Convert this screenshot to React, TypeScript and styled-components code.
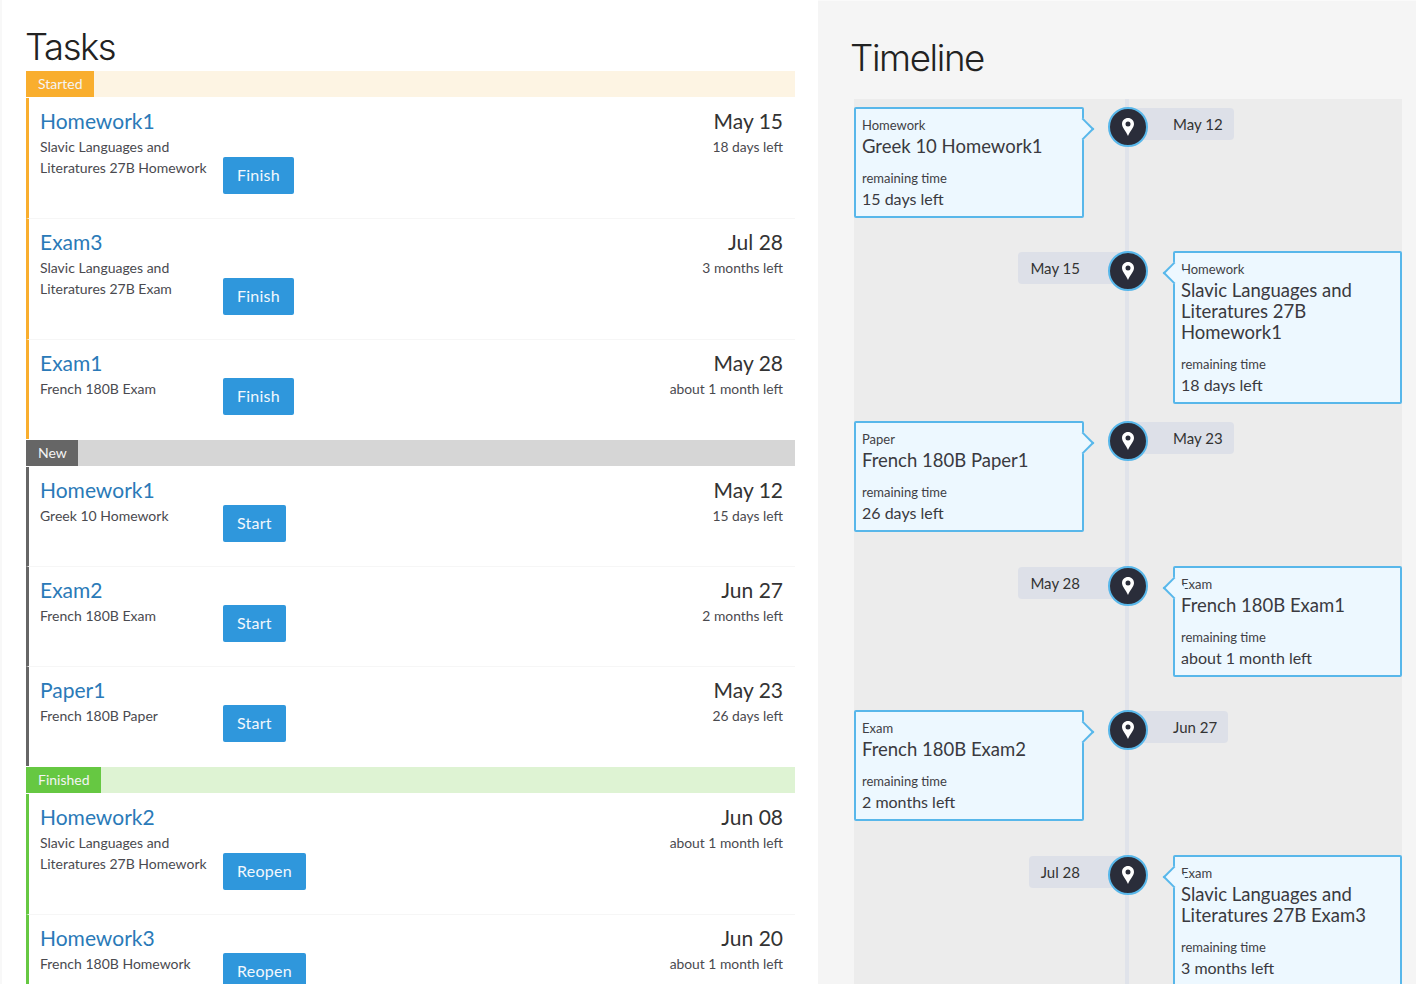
import React from 'react';
import styled, {createGlobalStyle} from 'styled-components';

const GlobalStyle = createGlobalStyle`
  html, body {
    margin: 0;
    padding: 0;
    background: #fff;
  }
  * {
    box-sizing: border-box;
  }
`;

const STATUS = {
  started: {bar: '#fdf4e3', badge: '#f9ae2e', line: '#f9ae2e'},
  fresh: {bar: '#d6d6d6', badge: '#666666', line: '#666666'},
  finished: {bar: '#def3d3', badge: '#66c842', line: '#66c842'}
};

type StatusKey = keyof typeof STATUS;

const Page = styled.div`
  display: flex;
  width: 1416px;
  height: 984px;
  overflow: hidden;
  font-family: Lato, 'Open Sans', sans-serif;
  color: #333;
`;

const TasksColumn = styled.div`
  width: 818px;
  flex: none;
  padding: 26px 23px 0 24px;
  border-left: 2px solid #f8f8f8;
  background: #fff;
`;

const TimelineColumn = styled.div`
  flex: 1;
  padding: 36px 16px 0 36px;
  background: #f5f5f5;
  border-top: 1px solid #fafafa;
`;

const Heading = styled.h1<{$large?: boolean}>`
  margin: ${(p) => (p.$large ? '-1px 0 19px -4px' : '0 0 3px -1px')};
  font-family: Inter, 'Liberation Sans', sans-serif;
  font-weight: 300;
  font-size: ${(p) => (p.$large ? 36.7 : 36.4)}px;
  line-height: ${(p) => (p.$large ? 44 : 42)}px;
  letter-spacing: -1.4px;
  color: #222;
`;

const SectionBar = styled.div<{$status: StatusKey}>`
  height: 26px;
  margin: 1px 0;
  background: ${(p) => STATUS[p.$status].bar};
`;

const SectionBadge = styled.span<{$status: StatusKey}>`
  display: inline-block;
  height: 26px;
  padding: 0 11.5px 0 12px;
  font-size: 14px;
  line-height: 26px;
  color: #f4f4f4;
  background: ${(p) => STATUS[p.$status].badge};
`;

const Task = styled.div<{$status: StatusKey}>`
  display: flex;
  justify-content: space-between;
  padding: 8px 12px 24px 11px;
  border-left: 3px solid ${(p) => STATUS[p.$status].line};
  border-bottom: 1px solid #f6f6f6;
  &:last-child {
    border-bottom: 0;
  }
`;

const TaskName = styled.a`
  display: block;
  font-size: 21px;
  line-height: 30px;
  color: #2a7ab8;
`;

const TaskBody = styled.div`
  display: flex;
  align-items: flex-end;
`;

const Course = styled.div`
  width: 183px;
  padding-bottom: 16px;
  font-size: 14px;
  line-height: 21px;
  color: #4a4a4f;
`;

const ActionButton = styled.button`
  height: 37px;
  padding: 0 14px 2px;
  border: 0;
  border-radius: 2px;
  font-family: inherit;
  font-size: 16px;
  letter-spacing: 0.25px;
  color: #f2f8fd;
  background: #2f97dc;
`;

const TaskDue = styled.div`
  text-align: right;
`;

const DueDate = styled.div`
  font-size: 21px;
  line-height: 30px;
  color: #333;
`;

const DueLeft = styled.div`
  font-size: 13.85px;
  line-height: 21px;
  color: #4a4a4f;
`;

const Track = styled.div`
  min-height: 900px;
  padding-top: 8px;
  background:
    linear-gradient(#e0e3ea, #e0e3ea) 271px 0 / 4px 100% no-repeat,
    #ececec;
`;

const TrackRow = styled.div<{$after: number}>`
  display: grid;
  grid-template-columns: 254px 40px 254px;
  align-items: start;
  margin-bottom: ${(p) => p.$after}px;
`;

const Card = styled.div<{$side: 'left' | 'right'}>`
  position: relative;
  width: ${(p) => (p.$side === 'left' ? 230 : 229)}px;
  margin-left: ${(p) => (p.$side === 'left' ? 0 : 25)}px;
  padding: 6px 6px 7px;
  border: 2px solid #58b7ea;
  border-radius: 2px;
  background: #edf8ff;
  &::after {
    content: '';
    position: absolute;
    top: 12px;
    width: 14px;
    height: 14px;
    background: #edf8ff;
    border-style: solid;
    border-color: #58b7ea;
    border-width: ${(p) => (p.$side === 'left' ? '2px 2px 0 0' : '0 0 2px 2px')};
    transform: rotate(45deg);
    ${(p) => (p.$side === 'left' ? 'right: -9px;' : 'left: -9px;')}
  }
`;

const CardType = styled.div`
  font-size: 13px;
  line-height: 20px;
  color: #3f3f45;
`;

const CardTitle = styled.div`
  padding-top: 1px;
  margin-bottom: 12px;
  font-size: 18.5px;
  line-height: 21px;
  color: #3a3a40;
`;

const CardLabel = styled.div`
  font-size: 13px;
  line-height: 19px;
  color: #3f3f45;
`;

const CardValue = styled.div`
  font-size: 16px;
  line-height: 21px;
  color: #3a3a40;
`;

const Marker = styled.div`
  position: relative;
  z-index: 1;
  display: flex;
  align-items: center;
  justify-content: center;
  width: 40px;
  height: 40px;
  border: 2.5px solid #58b7ea;
  border-radius: 50%;
  background: #2a2d3a;
`;

const DatePill = styled.div<{$side: 'left' | 'right'}>`
  justify-self: ${(p) => (p.$side === 'left' ? 'start' : 'end')};
  height: 32px;
  margin-top: 1px;
  margin-left: ${(p) => (p.$side === 'left' ? -20 : 0)}px;
  margin-right: ${(p) => (p.$side === 'right' ? -20 : 0)}px;
  padding: ${(p) => (p.$side === 'left' ? '0 11px 0 45px' : '0 48px 0 12px')};
  border-radius: 4px;
  font-size: 15px;
  line-height: 32px;
  color: #333;
  background: #dde0e8;
`;

const Pin = () => (
  <svg width="12" height="18" viewBox="0 0 12 18">
    <path
      fill="#fff"
      fillRule="evenodd"
      d="M6 0C2.7 0 0 2.6 0 5.9 0 9.6 4 12.8 6 18c2-5.200 6-8.400 6-12.100C12 2.600 9.300 0 6 0zm0 3.500a2.500 2.500 0 1 1 0 5 2.500 2.500 0 0 1 0-5z"
    />
  </svg>
);

const groups: {
  label: string;
  status: StatusKey;
  action: string;
  tasks: {name: string; course: string; date: string; left: string}[];
}[] = [
  {
    label: 'Started',
    status: 'started',
    action: 'Finish',
    tasks: [
      {name: 'Homework1', course: 'Slavic Languages and Literatures 27B Homework', date: 'May 15', left: '18 days left'},
      {name: 'Exam3', course: 'Slavic Languages and Literatures 27B Exam', date: 'Jul 28', left: '3 months left'},
      {name: 'Exam1', course: 'French 180B Exam', date: 'May 28', left: 'about 1 month left'}
    ]
  },
  {
    label: 'New',
    status: 'fresh',
    action: 'Start',
    tasks: [
      {name: 'Homework1', course: 'Greek 10 Homework', date: 'May 12', left: '15 days left'},
      {name: 'Exam2', course: 'French 180B Exam', date: 'Jun 27', left: '2 months left'},
      {name: 'Paper1', course: 'French 180B Paper', date: 'May 23', left: '26 days left'}
    ]
  },
  {
    label: 'Finished',
    status: 'finished',
    action: 'Reopen',
    tasks: [
      {name: 'Homework2', course: 'Slavic Languages and Literatures 27B Homework', date: 'Jun 08', left: 'about 1 month left'},
      {name: 'Homework3', course: 'French 180B Homework', date: 'Jun 20', left: 'about 1 month left'}
    ]
  }
];

const events: {
  type: string;
  title: string;
  date: string;
  left: string;
  side: 'left' | 'right';
  after: number;
}[] = [
  {type: 'Homework', title: 'Greek 10 Homework1', date: 'May 12', left: '15 days left', side: 'left', after: 33},
  {type: 'Homework', title: 'Slavic Languages and Literatures 27B Homework1', date: 'May 15', left: '18 days left', side: 'right', after: 17},
  {type: 'Paper', title: 'French 180B Paper1', date: 'May 23', left: '26 days left', side: 'left', after: 34},
  {type: 'Exam', title: 'French 180B Exam1', date: 'May 28', left: 'about 1 month left', side: 'right', after: 33},
  {type: 'Exam', title: 'French 180B Exam2', date: 'Jun 27', left: '2 months left', side: 'left', after: 34},
  {type: 'Exam', title: 'Slavic Languages and Literatures 27B Exam3', date: 'Jul 28', left: '3 months left', side: 'right', after: 0}
];

const App = () => {
  return (
    <Page>
      <GlobalStyle />
      <TasksColumn>
        <Heading>Tasks</Heading>
        {groups.map((group) => (
          <div key={group.label}>
            <SectionBar $status={group.status}>
              <SectionBadge $status={group.status}>{group.label}</SectionBadge>
            </SectionBar>
            {group.tasks.map((task) => (
              <Task key={task.name + task.date} $status={group.status}>
                <div>
                  <TaskName>{task.name}</TaskName>
                  <TaskBody>
                    <Course>{task.course}</Course>
                    <ActionButton>{group.action}</ActionButton>
                  </TaskBody>
                </div>
                <TaskDue>
                  <DueDate>{task.date}</DueDate>
                  <DueLeft>{task.left}</DueLeft>
                </TaskDue>
              </Task>
            ))}
          </div>
        ))}
      </TasksColumn>
      <TimelineColumn>
        <Heading $large>Timeline</Heading>
        <Track>
          {events.map((event) => {
            const card = (
              <Card $side={event.side}>
                <CardType>{event.type}</CardType>
                <CardTitle>{event.title}</CardTitle>
                <CardLabel>remaining time</CardLabel>
                <CardValue>{event.left}</CardValue>
              </Card>
            );
            const pill = <DatePill $side={event.side}>{event.date}</DatePill>;
            return (
              <TrackRow key={event.title} $after={event.after}>
                {event.side === 'left' ? card : pill}
                <Marker>
                  <Pin />
                </Marker>
                {event.side === 'left' ? pill : card}
              </TrackRow>
            );
          })}
        </Track>
      </TimelineColumn>
    </Page>
  );
};

export default App;
